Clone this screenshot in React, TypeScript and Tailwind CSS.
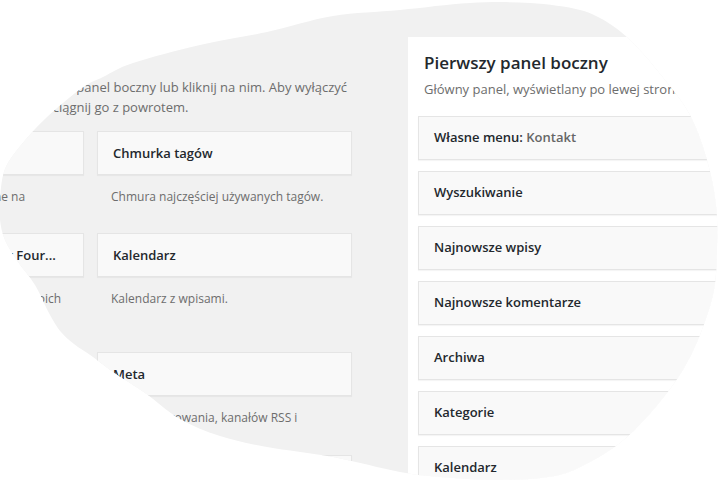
import React, { useMemo } from "react";

type P = [number, number];

const PTS: P[] = [
  [0, 200], [4, 172], [17, 150], [46, 118], [82, 88], [103, 77], [133, 63], [200, 45],
  [267, 32], [333, 16], [400, 10], [470, 3], [530, 3], [580, 10], [610, 24], [635, 45],
  [665, 80], [690, 115], [707, 160], [716, 205], [717, 250], [714, 290], [703, 327],
  [690, 357], [673, 385], [647, 417], [620, 443], [588, 463], [555, 476], [500, 480],
  [440, 477], [400, 472], [333, 457], [267, 447], [220, 436], [180, 419], [145, 393],
  [113, 372], [93, 357], [74, 344], [61, 332], [50, 315], [35, 285], [18, 262], [5, 240],
  [0, 220],
];

function smooth(pts: P[]): string {
  const n = pts.length;
  const f = (v: number) => v.toFixed(2);
  let d = `M${f(pts[0][0])} ${f(pts[0][1])}`;
  for (let i = 0; i < n; i++) {
    const p0 = pts[(i - 1 + n) % n];
    const p1 = pts[i];
    const p2 = pts[(i + 1) % n];
    const p3 = pts[(i + 2) % n];
    const c1x = p1[0] + (p2[0] - p0[0]) / 6;
    const c1y = p1[1] + (p2[1] - p0[1]) / 6;
    const c2x = p2[0] - (p3[0] - p1[0]) / 6;
    const c2y = p2[1] - (p3[1] - p1[1]) / 6;
    d += ` C${f(c1x)} ${f(c1y)} ${f(c2x)} ${f(c2y)} ${f(p2[0])} ${f(p2[1])}`;
  }
  return d + " Z";
}

function Widget({ title, desc }: { title: React.ReactNode; desc: React.ReactNode }) {
  return (
    <div>
      <div className="h-[44px] border border-[#e5e5e5] bg-[#f9f9f9] shadow-[0_1px_1px_rgba(0,0,0,0.04)] px-[15px] pt-[2px] flex items-center">
        <span className="text-[13px] font-semibold text-[#23282d] whitespace-nowrap">{title}</span>
      </div>
      <p className="pt-[12px] px-[14px] text-[12px] leading-[19px] text-[#6d6d6d] whitespace-nowrap">{desc}</p>
    </div>
  );
}

const ROWS: React.ReactNode[] = [
  <>
    Własne menu: <span className="text-[#666]">Kontakt</span>
  </>,
  "Wyszukiwanie",
  "Najnowsze wpisy",
  "Najnowsze komentarze",
  "Archiwa",
  "Kategorie",
  "Kalendarz",
];

export default function App() {
  const d = useMemo(() => smooth(PTS), []);
  return (
    <div className="w-[718px] h-[484px] bg-white overflow-hidden font-['Open_Sans',sans-serif]">
      <svg width="0" height="0" className="block">
        <defs>
          <clipPath id="blob" clipPathUnits="userSpaceOnUse">
            <path d={d} />
          </clipPath>
        </defs>
      </svg>
      <div className="w-[718px] h-[484px] bg-[#f1f1f1] [clip-path:url(#blob)] flex overflow-hidden">
        <div className="ml-[-171px] w-[523px] shrink-0 pt-[78px]">
          <p className="text-[13px] leading-[19.5px] text-[#6d6d6d] whitespace-nowrap">
            Aby aktywować widżet, przeciągnij go na panel boczny lub kliknij na nim. Aby wyłączyć
            <br />
            widżet i usunąć jego ustawienia, przeciągnij go z powrotem.
          </p>
          <div className="mt-[14px] grid grid-cols-[255px_255px] gap-x-[13px] grid-rows-[102px_119px_103px_auto]">
            <Widget title="Archiwa" desc={<>Archiwa wpisów umieszczone na<br />witrynie.</>} />
            <Widget title="Chmurka tagów" desc="Chmura najczęściej używanych tagów." />
            <Widget title="Ephemera motywu Twenty Four..." desc={<>Wyświetla najnowsze wpisy, dla Twoich<br />formatów.</>} />
            <Widget title="Kalendarz" desc="Kalendarz z wpisami." />
            <Widget title="Kategorie" desc={<>Lista lub rozwijane menu<br />kategorii.</>} />
            <Widget title="Meta" desc={<>Linki do logowania, kanałów RSS i<br />WordPress.org.</>} />
            <Widget title="Najnowsze komentarze" desc="Najnowsze komentarze na witrynie." />
            <Widget title="Najnowsze wpisy" desc="Najnowsze wpisy na witrynie." />
          </div>
        </div>
        <div className="ml-[56px] mt-[37px] w-[340px] shrink-0 bg-white">
          <div className="pl-[16px] pt-[14px]">
            <h2 className="text-[17px] leading-[24px] font-semibold text-[#23282d] whitespace-nowrap">Pierwszy panel boczny</h2>
            <p className="mt-[5px] text-[13px] leading-[19.5px] text-[#6d6d6d] whitespace-nowrap">
              Główny panel, wyświetlany po lewej stron.
            </p>
          </div>
          <div className="mt-[16px] pl-[10px] flex flex-col gap-[11px]">
            {ROWS.map((r, i) => (
              <div
                key={i}
                className="h-[44px] border border-[#e5e5e5] bg-[#f9f9f9] shadow-[0_1px_1px_rgba(0,0,0,0.04)] px-[15px] pt-[1px] flex items-center"
              >
                <span className="text-[13px] font-semibold text-[#23282d] whitespace-nowrap">{r}</span>
              </div>
            ))}
          </div>
        </div>
      </div>
    </div>
  );
}
